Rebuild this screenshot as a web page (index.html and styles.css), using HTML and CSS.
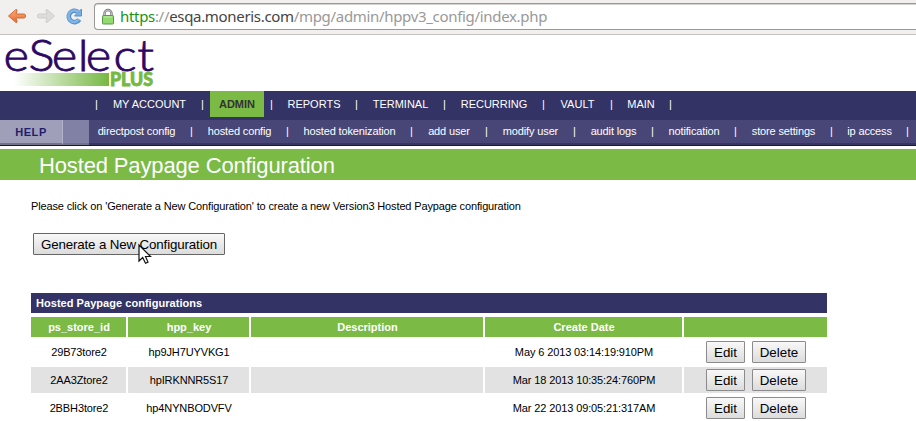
FILE: index.html
```html
<!DOCTYPE html>
<html lang="en">
<head>
<meta charset="utf-8">
<title>Hosted Paypage Configuration</title>
<link rel="stylesheet" href="styles.css">
</head>
<body>
<div class="browser">
  <svg class="controls" width="94" height="34" viewBox="0 0 94 34">
    <defs>
      <linearGradient id="orange" x1="0" y1="0" x2="0" y2="1"><stop offset="0" stop-color="#f7ae7d"/><stop offset="1" stop-color="#ec6c2c"/></linearGradient>
    </defs>
    <path d="M8.500 16L16 9.500Q17.500 9.500 17 11L15.800 14H24Q25.500 14 25.500 16T24 18H15.800L17 21Q17.500 22.500 16 22.500Z" fill="url(#orange)" stroke="#cf6936" stroke-linejoin="round"/>
    <path d="M54.500 16L47 9.500Q45.500 9.500 46 11L47.200 14H39Q37.500 14 37.500 16T39 18H47.200L46 21Q45.500 22.500 47 22.500Z" fill="#dedcda" stroke="#cfcdcb" stroke-linejoin="round"/>
    <path d="M79.300 19.500A5.700 5.700 0 1 1 77.800 11.800" fill="none" stroke="#5590c9" stroke-width="4.600"/>
    <path d="M81.500 9V16H74.500Z" fill="#78aee0" stroke="#5590c9" stroke-linejoin="round"/>
    <path d="M78.900 19.400A5.700 5.700 0 1 1 78.300 12.300" fill="none" stroke="#82b5e5" stroke-width="2.600"/>
  </svg>
  <div class="address">
    <svg class="lock" width="12" height="16" viewBox="0 0 12 16">
      <path d="M2.500 8V4.500a3.500 3.500 0 0 1 7 0V8" fill="none" stroke="#777" stroke-width="2.400"/>
      <path d="M2.500 8V4.500a3.500 3.500 0 0 1 7 0V8" fill="none" stroke="#ddd" stroke-width=".8"/>
      <rect x=".5" y="6.500" width="11" height="8.500" rx=".8" fill="#92da70" stroke="#58964a"/>
      <path d="M2 8H10" stroke="#c2efab"/>
    </svg>
    <span class="url"><span class="secure">https</span>://<span class="host">esqa.moneris.com</span><span class="path">/mpg/admin/hppv3_config/index.php</span></span>
  </div>
</div>
<header class="brand">
  <svg width="160" height="55" viewBox="0 36 160 55">
    <defs><linearGradient id="fade"><stop offset="0" stop-color="#fff"/><stop offset="1" stop-color="#77b843"/></linearGradient></defs>
    <rect x="14" y="73" width="95" height="13" fill="url(#fade)"/>
    <text class="wordmark" transform="scale(1.15 1)" x="3 24.800 45 67.600 74.600 98.800 119.300" y="71">eSelect</text>
    <text class="plus" x="110" y="86" textLength="43" lengthAdjust="spacingAndGlyphs">PLUS</text>
  </svg>
</header>
<nav class="main-nav">
  <span class="bar">|</span>
  <div><a>MY ACCOUNT</a><span class="bar">|</span></div>
  <div><a class="active">ADMIN</a><span class="bar">|</span></div>
  <div><a>REPORTS</a><span class="bar">|</span></div>
  <div><a>TERMINAL</a><span class="bar">|</span></div>
  <div><a>RECURRING</a><span class="bar">|</span></div>
  <div><a>VAULT</a><span class="bar">|</span></div>
  <div><a>MAIN</a><span class="bar">|</span></div>
</nav>
<div class="sub-row">
  <a class="help">HELP</a><span class="help-edge"></span>
  <nav class="sub-nav">
    <div><a>directpost config</a><span class="bar">|</span></div>
    <div><a>hosted config</a><span class="bar">|</span></div>
    <div><a>hosted tokenization</a><span class="bar">|</span></div>
    <div><a>add user</a><span class="bar">|</span></div>
    <div><a>modify user</a><span class="bar">|</span></div>
    <div><a>audit logs</a><span class="bar">|</span></div>
    <div><a>notification</a><span class="bar">|</span></div>
    <div><a>store settings</a><span class="bar">|</span></div>
    <div><a>ip access</a><span class="bar">|</span></div>
  </nav>
</div>
<h1>Hosted Paypage Configuration</h1>
<main>
  <p>Please click on 'Generate a New Configuration' to create a new Version3 Hosted Paypage configuration</p>
  <div class="generate-wrap">
    <button class="generate">Generate a New Configuration</button>
    <svg class="cursor" width="15" height="22" viewBox="0 0 15 22"><path d="M1 1V17L4.700 13.500L7.500 19.300L10 18.100L7.500 12.500H12.500Z" fill="#fff" stroke="#111" stroke-width="1.200"/></svg>
  </div>
  <section class="configs">
    <h2>Hosted Paypage configurations</h2>
    <div class="row head"><span>ps_store_id</span><span>hpp_key</span><span>Description</span><span>Create Date</span><span></span></div>
    <div class="row"><span>29B73tore2</span><span>hp9JH7UYVKG1</span><span></span><span>May 6 2013 03:14:19:910PM</span><span class="actions"><button>Edit</button><button>Delete</button></span></div>
    <div class="row alt"><span>2AA3Ztore2</span><span>hpIRKNNR5S17</span><span></span><span>Mar 18 2013 10:35:24:760PM</span><span class="actions"><button>Edit</button><button>Delete</button></span></div>
    <div class="row"><span>2BBH3tore2</span><span>hp4NYNBODVFV</span><span></span><span>Mar 22 2013 09:05:21:317AM</span><span class="actions"><button>Edit</button><button>Delete</button></span></div>
  </section>
</main>
</body>
</html>
```
FILE: styles.css
```css
* { box-sizing: border-box; }
body { margin: 0; height: 421px; overflow: hidden; background: #fff; color: #000; font: 11px/14px "Liberation Sans", Arial, sans-serif; }
svg { display: block; overflow: visible; }
.browser { height: 35px; display: flex; background: #f1f0ef; border-bottom: 1px solid #c4c2c0; }
.controls { flex: none; }
.address { flex: 1; height: 27px; margin-top: 3px; display: flex; align-items: center; background: #fff; border: 1px solid #9b9994; border-right: 0; border-radius: 4px 0 0 4px; box-shadow: inset 0 1px #d5d3d1; }
.lock { margin-left: 7px; }
.url { margin: -2px 0 0 6px; font: 15px/20px "Noto Sans", sans-serif; letter-spacing: -.32px; color: #999; white-space: nowrap; }
.secure { color: #159515; }
.host { color: #444; }
.brand { height: 56px; padding-top: 1px; }
.wordmark { font: 300 42.500px Lato, sans-serif; fill: #2d0764; stroke: #2d0764; stroke-width: .8px; }
.plus { font: 900 18px Lato, sans-serif; fill: #77b843; stroke: #77b843; stroke-width: .8px; }
.main-nav { height: 29px; padding-left: 89px; display: grid; grid-template-columns: 15px 106px 69px 85px 88px 99px 68px 59px; background: #336; color: #fff; line-height: 26px; }
.main-nav > div, .sub-nav > div { display: flex; height: 26px; white-space: nowrap; }
.main-nav a, .sub-nav a { flex: 1; text-align: center; }
.bar { width: 15px; text-align: center; }
.main-nav .active { background: #7aba45; color: #333; font-weight: bold; }
.sub-row { height: 26px; display: flex; background: #474676; border-bottom: 1px solid #1b1a32; box-shadow: inset 0 -2px #393761; line-height: 23px; }
.help { width: 63px; background: #a09fba; border-right: 1px solid #b3b2cc; border-bottom: 2px solid #737289; color: #1e1e6e; font-weight: bold; letter-spacing: .6px; text-align: center; line-height: 24px; }
.help-edge { width: 26px; background: #8180a5; border-bottom: 2px solid #737289; }
.sub-nav { display: grid; grid-template-columns: 110px 96px 124px 75px 88px 78px 83px 96px 76px; color: #fff; }
.sub-nav a { letter-spacing: -.14px; }
h1 { height: 31px; margin: 3px 0 0; padding-left: 39px; background: #7aba45; color: #fff; font-weight: normal; font-size: 22px; line-height: 34px; letter-spacing: -.14px; }
main { padding: 19px 0 0 31px; }
p { margin: 0; letter-spacing: -.14px; }
.generate-wrap { position: relative; width: 196px; padding: 20px 2px 0; }
button { height: 22px; padding: 0; border: 1px solid #8b8b8b; border-radius: 1px; background: linear-gradient(#f8f8f8, #dcdcdc); font: 13.333px "Liberation Sans", Arial, sans-serif; color: #000; white-space: nowrap; }
.generate { display: block; width: 192px; border-color: #666; letter-spacing: -.14px; }
.cursor { position: absolute; left: 107px; top: 31px; }
.configs { width: 796px; margin-top: 38px; }
h2 { height: 20px; margin: 0 0 4px; padding-left: 5px; background: #336; color: #fff; font-size: 11px; line-height: 20px; letter-spacing: .04px; }
.row { display: grid; grid-template-columns: 95px 121px 232px 197px 143px; gap: 2px; height: 26px; margin-bottom: 2px; text-align: center; line-height: 26px; letter-spacing: -.12px; }
.row > span { padding-left: 1px; }
.head { height: 20px; color: #fff; font-weight: bold; line-height: 20px; letter-spacing: 0; }
.head span { background: #7aba45; }
.alt > span { background: #e2e2e2; }
.row > .actions { display: flex; gap: 7px; padding: 2px 0 0 22px; }
.actions button { width: 39px; }
.actions button + button { width: 54px; }
```
